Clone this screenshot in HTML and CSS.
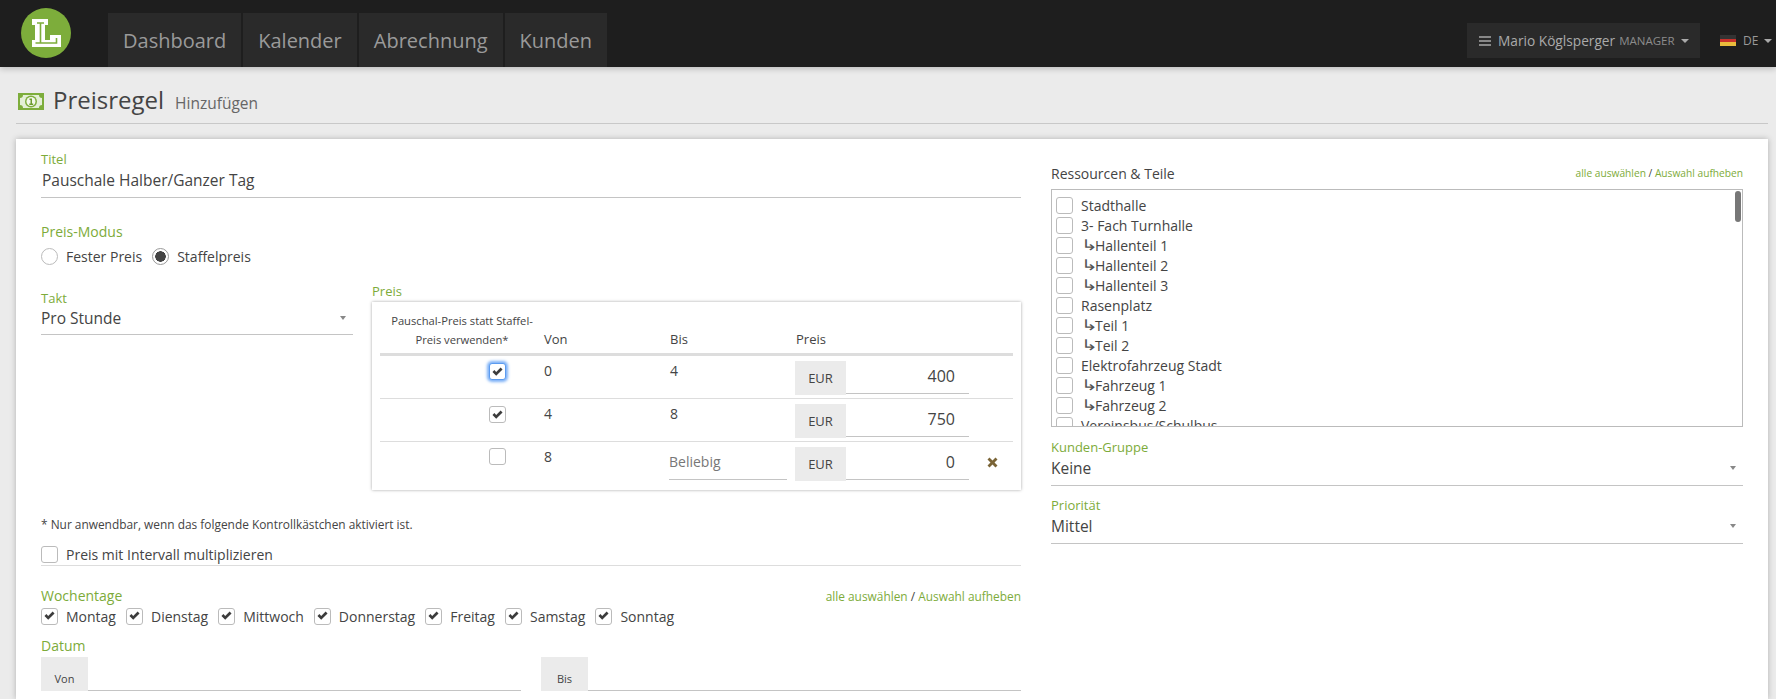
FILE: index.html
```html
<!DOCTYPE html>
<html lang="de">
<head>
    <meta charset="UTF-8">
    <title>Preisregel Hinzufügen</title>
    <link rel="stylesheet" href="styles.css">
</head>
<body>
    <svg class="defs" width="0" height="0">
        <symbol id="tick" viewBox="0 0 12 10">
            <path d="M.5 5 L2.600 2.900 L4.600 4.900 L9.400 .1 L11.500 2.200 L4.600 9.100 Z"/>
        </symbol>
    </svg>

    <header class="topbar">
        <svg class="logo" width="50" height="50" viewBox="0 0 50 50">
            <circle cx="25" cy="25" r="25" fill="#7dad3b"/>
            <path fill="#fff" d="M11 11h16v6h-3v15h5v-5h11v12H11v-7h3V17h-3z"/>
            <path fill="none" stroke="#7dad3b" stroke-width="1.6" d="M16 15h7M19.500 15v20h-5M19.500 35h16v-5"/>
        </svg>
        <nav class="tabs">
            <a class="tab">Dashboard</a>
            <a class="tab">Kalender</a>
            <a class="tab">Abrechnung</a>
            <a class="tab">Kunden</a>
        </nav>
        <div class="user-menu">
            <span class="burger"><i></i><i></i><i></i></span>
            <span class="user-name">Mario Köglsperger</span>
            <span class="user-role">MANAGER</span>
            <span class="caret"></span>
        </div>
        <div class="lang">
            <span class="flag"><i class="black"></i><i class="red"></i><i class="gold"></i></span>
            <span>DE</span>
            <span class="caret"></span>
        </div>
    </header>

    <div class="page-title">
        <svg class="money" width="26" height="17" viewBox="0 0 26 17">
            <path fill="#7dad3b" d="M0 0h26v17H0z"/>
            <path fill="#e4efd6" d="M5 2h16a3 3 0 0 0 3 3v7a3 3 0 0 0-3 3H5a3 3 0 0 0-3-3V5a3 3 0 0 0 3-3z"/>
            <circle cx="13" cy="8.500" r="6" fill="#7dad3b"/>
            <circle cx="13" cy="8.500" r="4.500" fill="#f2f7ea"/>
            <path fill="#6d9c30" d="M11.500 5.500h2.500v5h1.200v1.500h-3.900v-1.500h1.200V7h-1z"/>
        </svg>
        <h1>Preisregel</h1>
        <small>Hinzufügen</small>
    </div>

    <main class="card">
        <div class="col-left">
            <label class="lbl">Titel</label>
            <div class="text-field">Pauschale Halber/Ganzer Tag</div>

            <label class="lbl mode-lbl">Preis-Modus</label>
            <div class="radios">
                <span class="radio"></span><span class="radio-text">Fester Preis</span>
                <span class="radio on"></span><span>Staffelpreis</span>
            </div>

            <div class="price-row">
                <div class="takt">
                    <label class="lbl">Takt</label>
                    <div class="select">Pro Stunde<span class="sel-caret"></span></div>
                </div>
                <div class="price">
                    <label class="lbl">Preis</label>
                    <div class="price-box">
                        <table class="price-table">
                            <thead>
                                <tr>
                                    <th class="th-flat">Pauschal-Preis statt Staffel-Preis verwenden*</th>
                                    <th class="th-von">Von</th>
                                    <th class="th-bis">Bis</th>
                                    <th class="th-preis">Preis</th>
                                    <th></th>
                                </tr>
                            </thead>
                            <tbody>
                                <tr class="row-first">
                                    <td class="td-check"><span class="cb focus"><svg><use href="#tick"/></svg></span></td>
                                    <td>0</td>
                                    <td>4</td>
                                    <td><div class="money-input"><span class="addon">EUR</span><span class="amount">400</span></div></td>
                                    <td></td>
                                </tr>
                                <tr>
                                    <td class="td-check"><span class="cb"><svg><use href="#tick"/></svg></span></td>
                                    <td>4</td>
                                    <td>8</td>
                                    <td><div class="money-input"><span class="addon">EUR</span><span class="amount">750</span></div></td>
                                    <td></td>
                                </tr>
                                <tr>
                                    <td class="td-check"><span class="cb"></span></td>
                                    <td>8</td>
                                    <td><div class="any">Beliebig</div></td>
                                    <td><div class="money-input"><span class="addon">EUR</span><span class="amount">0</span></div></td>
                                    <td class="td-del"><svg width="11" height="11" viewBox="0 0 11 11"><path fill="#7a6436" d="M2.500 .5 5.500 3.500 8.500 .5 10.500 2.500 7.500 5.500 10.500 8.500 8.500 10.500 5.500 7.500 2.500 10.500 .5 8.500 3.500 5.500 .5 2.500z"/></svg></td>
                                </tr>
                            </tbody>
                        </table>
                    </div>
                </div>
            </div>

            <p class="note">* Nur anwendbar, wenn das folgende Kontrollkästchen aktiviert ist.</p>
            <div class="multiply"><span class="cb"></span><span>Preis mit Intervall multiplizieren</span></div>

            <div class="head-row days-head">
                <label class="lbl">Wochentage</label>
                <span class="links"><a>alle auswählen</a> / <a>Auswahl aufheben</a></span>
            </div>
            <div class="days">
                <span class="day"><span class="cb"><svg><use href="#tick"/></svg></span>Montag</span>
                <span class="day"><span class="cb"><svg><use href="#tick"/></svg></span>Dienstag</span>
                <span class="day"><span class="cb"><svg><use href="#tick"/></svg></span>Mittwoch</span>
                <span class="day"><span class="cb"><svg><use href="#tick"/></svg></span>Donnerstag</span>
                <span class="day"><span class="cb"><svg><use href="#tick"/></svg></span>Freitag</span>
                <span class="day"><span class="cb"><svg><use href="#tick"/></svg></span>Samstag</span>
                <span class="day"><span class="cb"><svg><use href="#tick"/></svg></span>Sonntag</span>
            </div>

            <label class="lbl date-lbl">Datum</label>
            <div class="dates">
                <div class="date-field"><span class="date-addon">Von</span><span class="date-line"></span></div>
                <div class="date-field"><span class="date-addon">Bis</span><span class="date-line"></span></div>
            </div>
        </div>

        <div class="col-right">
            <div class="head-row res-head">
                <span class="res-title">Ressourcen &amp; Teile</span>
                <span class="links"><a>alle auswählen</a> / <a>Auswahl aufheben</a></span>
            </div>
            <div class="res-box">
                <div class="res-row"><span class="cb"></span>Stadthalle</div>
                <div class="res-row"><span class="cb"></span>3- Fach Turnhalle</div>
                <div class="res-row"><span class="cb"></span><span class="arrow">↳</span>Hallenteil 1</div>
                <div class="res-row"><span class="cb"></span><span class="arrow">↳</span>Hallenteil 2</div>
                <div class="res-row"><span class="cb"></span><span class="arrow">↳</span>Hallenteil 3</div>
                <div class="res-row"><span class="cb"></span>Rasenplatz</div>
                <div class="res-row"><span class="cb"></span><span class="arrow">↳</span>Teil 1</div>
                <div class="res-row"><span class="cb"></span><span class="arrow">↳</span>Teil 2</div>
                <div class="res-row"><span class="cb"></span>Elektrofahrzeug Stadt</div>
                <div class="res-row"><span class="cb"></span><span class="arrow">↳</span>Fahrzeug 1</div>
                <div class="res-row"><span class="cb"></span><span class="arrow">↳</span>Fahrzeug 2</div>
                <div class="res-row"><span class="cb"></span>Vereinsbus/Schulbus</div>
                <span class="scroll-thumb"></span>
            </div>

            <label class="lbl group-lbl">Kunden-Gruppe</label>
            <div class="select">Keine<span class="sel-caret"></span></div>
            <label class="lbl prio-lbl">Priorität</label>
            <div class="select">Mittel<span class="sel-caret"></span></div>
        </div>
    </main>
</body>
</html>
```
FILE: styles.css
```css
* {
    box-sizing: border-box;
}
html, body {
    height: 699px;
    overflow: hidden;
}
body {
    margin: 0;
    background-color: #ebebeb;
    color: #444;
    font-family: "Open Sans", sans-serif;
    font-size: 14px;
}
.defs {
    position: absolute;
}

/* top bar */
.topbar {
    display: flex;
    height: 67px;
    padding-left: 21px;
    background-color: #1e1e1e;
    box-shadow: 0 2px 6px rgba(0, 0, 0, 0.2);
}
.logo {
    margin-top: 8px;
}
.tabs {
    display: flex;
    gap: 2px;
    margin: 13px 0 0 37px;
}
.tab {
    display: flex;
    align-items: center;
    height: 54px;
    padding: 0 15px;
    background-color: #2a2a2a;
    color: #9a9a9a;
    font-size: 20px;
}
.user-menu {
    display: flex;
    align-items: center;
    width: 233px;
    height: 35px;
    margin: 23px 0 0 auto;
    padding-left: 12px;
    background-color: #2a2a2a;
    color: #aaa;
}
.burger {
    display: flex;
    flex-direction: column;
    gap: 2px;
    width: 12px;
    margin-right: 7px;
}
.burger i {
    height: 2px;
    background-color: #888;
}
.user-name {
    font-size: 13.700px;
    margin-right: 4px;
}
.user-role {
    color: #8c8c8c;
    font-size: 11.500px;
}
.caret {
    width: 0;
    height: 0;
    margin-left: 6px;
    border-top: 4px solid #aaa;
    border-left: 4px solid transparent;
    border-right: 4px solid transparent;
}
.lang {
    display: flex;
    align-items: center;
    width: 76px;
    height: 35px;
    margin-top: 23px;
    padding-left: 20px;
    color: #999;
    font-size: 12px;
}
.flag {
    display: flex;
    flex-direction: column;
    width: 16px;
    height: 11px;
    margin-right: 7px;
}
.flag i {
    flex: 1;
}
.flag .black { background-color: #333; }
.flag .red { background-color: #c8312b; }
.flag .gold { background-color: #e8bb3c; }

/* page heading */
.page-title {
    display: flex;
    align-items: baseline;
    height: 57px;
    margin: 0 8px 15px 16px;
    padding: 16px 0 0 2px;
    border-bottom: 1px solid #c8c8c8;
}
.money {
    align-self: flex-start;
    margin: 10px 9px 0 0;
}
.page-title h1 {
    margin: 0;
    font-size: 24px;
    font-weight: 400;
    color: #444;
}
.page-title small {
    margin-left: 11px;
    font-size: 15.500px;
    color: #666;
}

/* card */
.card {
    display: grid;
    grid-template-columns: 980px 692px;
    column-gap: 30px;
    height: 560px;
    margin: 0 8px 0 16px;
    padding: 11px 25px 0;
    background-color: #fff;
    box-shadow: 0 0 6px rgba(0, 0, 0, 0.25);
}
.lbl {
    display: block;
    color: #7dab3a;
    font-size: 13px;
    line-height: 18px;
}
.text-field {
    height: 30px;
    padding-left: 1px;
    border-bottom: 1px solid #c4c4c4;
    font-size: 15.500px;
    line-height: 24px;
}
.mode-lbl {
    margin-top: 25px;
    font-size: 14px;
}
.radios {
    display: flex;
    align-items: center;
    height: 20px;
    margin-top: 5px;
}
.radio {
    width: 17px;
    height: 17px;
    margin-right: 8px;
    border: 1px solid #bbb;
    border-radius: 50%;
    background-color: #fff;
}
.radio.on {
    border: 1px solid #999;
    background: radial-gradient(circle, #444 0 5px, #fff 5.500px);
}
.radio-text {
    margin-right: 10px;
}

.price-row {
    display: flex;
    margin-top: 23px;
}
.takt {
    width: 312px;
    margin-right: 19px;
}
.select {
    display: flex;
    justify-content: space-between;
    align-items: center;
    height: 30px;
    padding: 0 7px 6px 0;
    border-bottom: 1px solid #c4c4c4;
    font-size: 15.500px;
}
.takt .select {
    height: 28px;
}
.sel-caret {
    width: 0;
    height: 0;
    border-top: 4px solid #888;
    border-left: 3px solid transparent;
    border-right: 3px solid transparent;
}
.price {
    flex: 1;
}
.price .lbl {
    height: 20px;
    margin-top: -7px;
}
.price-box {
    height: 188px;
    padding: 7px 8px 0;
    background-color: #fff;
    box-shadow: 0 0 3px rgba(0, 0, 0, 0.35);
}
.price-table {
    width: 100%;
    border-collapse: collapse;
    table-layout: fixed;
}
.price-table th {
    height: 45px;
    padding: 0 0 5px;
    border-bottom: 3px solid #ddd;
    font-size: 13px;
    font-weight: 400;
    text-align: left;
    vertical-align: bottom;
}
.price-table .th-flat {
    width: 164px;
    padding: 0 8px 4px 8px;
    font-size: 11.200px;
    line-height: 19px;
    text-align: center;
}
.th-von { width: 126px; }
.th-bis { width: 126px; }
.th-preis { width: 175px; }
.price-table td {
    height: 43px;
    padding: 5px 0 0;
    border-bottom: 1px solid #ddd;
    font-size: 14px;
    vertical-align: top;
}
.price-table .row-first td {
    height: 44px;
}
.price-table tr:last-child td {
    border-bottom: none;
}
.price-table .td-check {
    padding: 6px 0 0 109px;
}
.price-table .td-del {
    padding: 11px 0 0 16px;
}
.money-input {
    display: flex;
    height: 34px;
    margin-left: -1px;
}
.addon {
    width: 51px;
    background-color: #ebebeb;
    font-size: 13px;
    line-height: 34px;
    text-align: center;
}
.amount {
    width: 123px;
    height: 33px;
    padding-right: 14px;
    border-bottom: 1px solid #c4c4c4;
    font-size: 16px;
    line-height: 31px;
    text-align: right;
}
.any {
    width: 118px;
    height: 33px;
    margin-left: -1px;
    border-bottom: 1px solid #c4c4c4;
    color: #777;
    font-size: 14px;
    line-height: 30px;
}

/* checkboxes */
.cb {
    display: inline-flex;
    flex: none;
    align-items: center;
    justify-content: center;
    width: 17px;
    height: 17px;
    border: 1px solid #bbb;
    border-radius: 3px;
    background-color: #fff;
}
.cb svg {
    width: 11px;
    height: 10px;
    fill: #3c3c3c;
}
.cb.focus {
    border-color: #5b9bf0;
    box-shadow: 0 0 3px 2px #7bb0f7;
}

.note {
    margin: 25px 0 0;
    font-size: 11.900px;
    line-height: 18px;
}
.multiply {
    display: flex;
    align-items: center;
    gap: 8px;
    height: 24px;
    margin-top: 9px;
    padding-top: 1px;
    border-bottom: 1px solid #ddd;
}
.head-row {
    display: flex;
    justify-content: space-between;
    align-items: center;
}
.days-head {
    margin-top: 21px;
}
.days-head .lbl {
    font-size: 14px;
}
.links {
    color: #444;
    font-size: 11.900px;
}
.links a {
    color: #7dab3a;
}
.days {
    display: flex;
    gap: 10px;
    height: 20px;
    margin-top: 1px;
}
.day {
    display: flex;
    align-items: center;
    gap: 8px;
}
.date-lbl {
    margin-top: 11px;
    font-size: 14px;
}
.dates {
    display: flex;
    justify-content: space-between;
    margin-top: 2px;
}
.date-field {
    display: flex;
    width: 480px;
    height: 34px;
}
.date-addon {
    width: 47px;
    padding-top: 14px;
    background-color: #ebebeb;
    font-size: 11px;
    text-align: center;
}
.date-line {
    flex: 1;
    border-bottom: 1px solid #c4c4c4;
}

/* right column */
.res-head {
    height: 20px;
    margin-top: 13px;
}
.res-head .links {
    font-size: 10.200px;
}
.res-title {
    font-size: 14px;
}
.res-box {
    position: relative;
    height: 238px;
    margin-top: 6px;
    padding: 5px 0 0 4px;
    border: 1px solid #bbb;
    overflow: hidden;
}
.res-row {
    display: flex;
    align-items: center;
    gap: 8px;
    height: 20px;
}
.arrow {
    width: 14px;
    margin-right: -8px;
    color: #555;
    font-family: "DejaVu Sans", sans-serif;
    font-size: 15px;
    line-height: 1;
    transform: scaleX(1.35);
    transform-origin: left center;
}
.scroll-thumb {
    position: absolute;
    top: 1px;
    right: 1px;
    width: 6px;
    height: 31px;
    border-radius: 3px;
    background-color: #777;
}
.group-lbl {
    margin-top: 11px;
}
.prio-lbl {
    margin-top: 10px;
}
```
